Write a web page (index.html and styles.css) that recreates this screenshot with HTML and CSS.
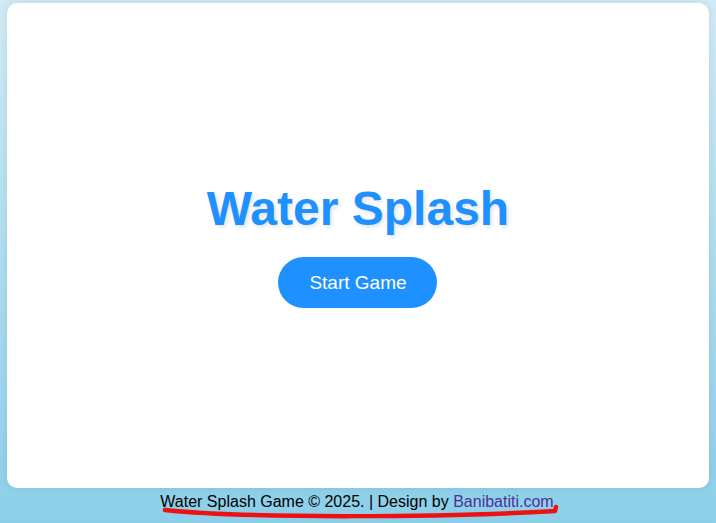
FILE: index.html
```html
<!DOCTYPE html>
<html lang="en">
<head>
    <meta charset="UTF-8">
    <meta name="viewport" content="width=device-width, initial-scale=1.0">
    <title>Water Splash</title>
    <link rel="stylesheet" href="styles.css">
</head>
<body>
    <div class="game_container">
        <div class="start_screen">
            <h1 class="game_title">Water Splash</h1>
            <button class="start_btn">Start Game</button>
        </div>
    </div>

    <footer class="footer">
        <span class="footer_text">
            Water Splash Game &copy; 2025. | Design by <a href="#">Banibatiti.com</a>
            <svg class="footer_swoosh" width="400" height="22" viewBox="0 0 400 22">
                <path d="M5 9 C90 18, 290 16, 395 10 L396 6" fill="none" stroke="#ee1111" stroke-width="4.5" stroke-linecap="round" stroke-linejoin="round"/>
            </svg>
        </span>
    </footer>
</body>
</html>
```

FILE: styles.css
```css
*{
    box-sizing: border-box;
    margin: 0;
    padding: 0;
}

html, body{
    height: 100%;
}

body{
    font-family: Arial, "Liberation Sans", sans-serif;
    background: linear-gradient(to bottom, #d2ebf4, #8ccfe9);
    display: flex;
    flex-direction: column;
    overflow: hidden;
}

.game_container{
    flex: 1;
    margin: 3px 7px 0 7px;
    background-color: #ffffff;
    border-radius: 10px;
    box-shadow: 0 0 8px rgba(0, 80, 120, 0.12);
    display: flex;
    align-items: center;
    justify-content: center;
}

.start_screen{
    display: flex;
    flex-direction: column;
    align-items: center;
    margin-top: -2px;
}

.game_title{
    font-size: 48px;
    font-weight: bold;
    color: #1e90ff;
    text-shadow: 2px 2px 4px rgba(0, 0, 0, 0.12);
    margin-bottom: 21px;
}

.start_btn{
    font-family: Arial, "Liberation Sans", sans-serif;
    font-size: 19px;
    color: #ffffff;
    background-color: #1e90ff;
    border: none;
    border-radius: 26px;
    width: 159px;
    height: 51px;
    cursor: pointer;
}

.footer{
    height: 35px;
    display: flex;
    align-items: center;
    justify-content: center;
    padding-bottom: 7px;
    font-size: 16px;
    color: #000000;
}

.footer_text{
    position: relative;
    margin-left: -2px;
}

.footer_text a{
    color: #4f2f9a;
    text-decoration: none;
}

.footer_swoosh{
    position: absolute;
    left: 0;
    top: 8px;
    pointer-events: none;
}
```
